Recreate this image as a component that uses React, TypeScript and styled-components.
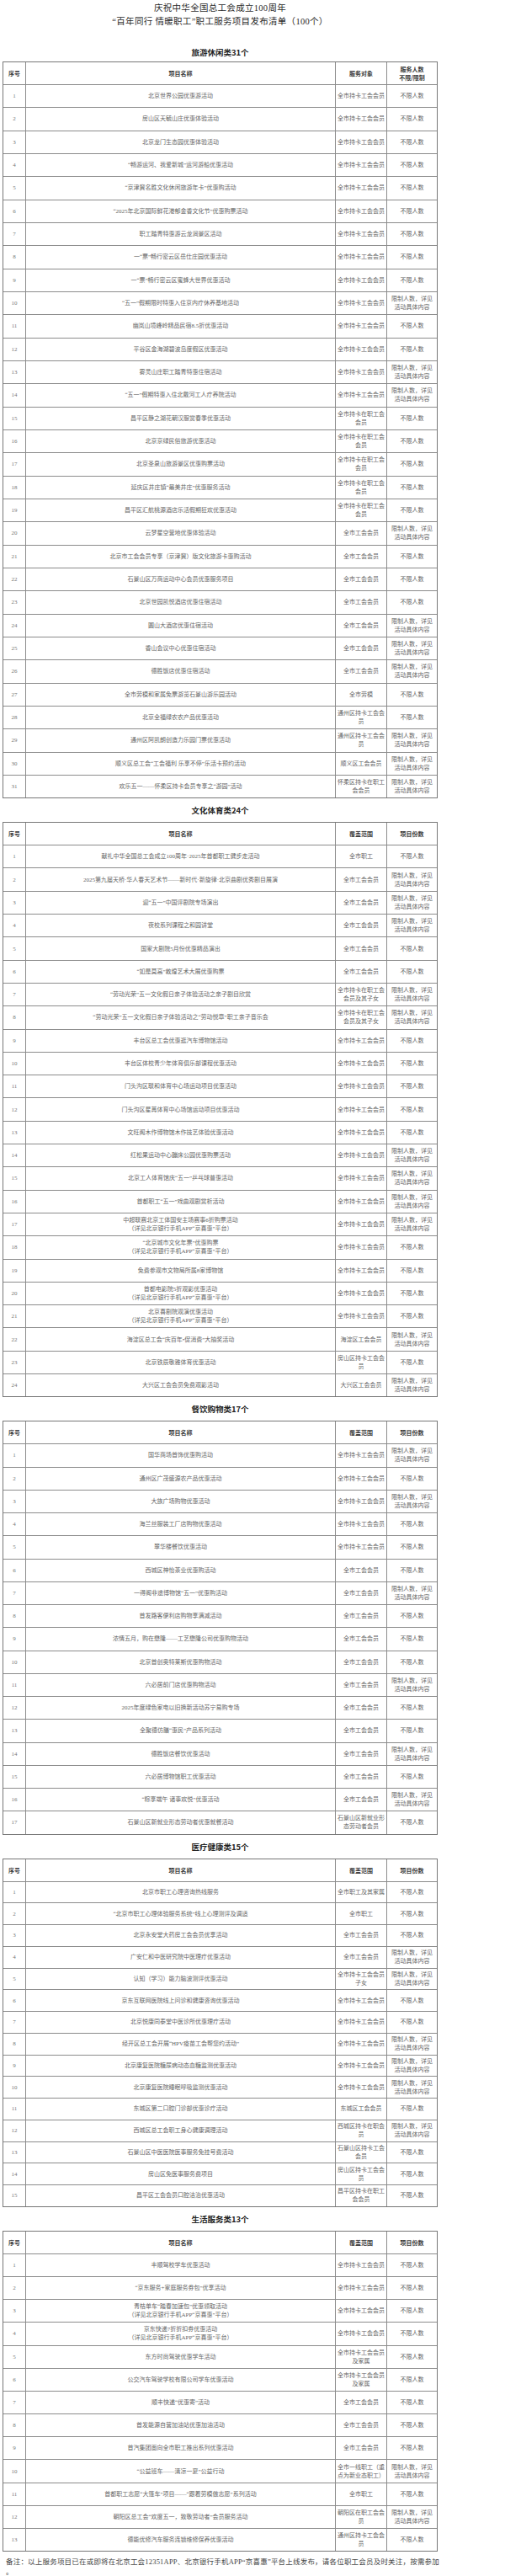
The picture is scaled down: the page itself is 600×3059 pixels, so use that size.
import styled, { createGlobalStyle } from "styled-components";

const GlobalStyle = createGlobalStyle`
  html, body {
    margin: 0;
    padding: 0;
    background: #fff;
  }
  body {
    font-family: "Liberation Serif", "Noto Sans CJK SC", serif;
  }
`;

// [项目名称, 服务对象/覆盖范围, 是否限制人数]
type Item = [string, string, 0 | 1];

type Section = {
  title: string;
  targetLabel: string;
  quotaLabel: string;
  headH: number;
  rowH: number;
  items: Item[];
};

const LIMIT = "限制人数，详见\n活动具体内容";
const FREE = "不限人数";
const JXH = "\n（详见北京银行手机APP“京喜惠”平台）";

const sections: Section[] = [
  {
    title: "旅游休闲类31个",
    targetLabel: "服务对象",
    quotaLabel: "服务人数\n不限/限制",
    headH: 27,
    rowH: 27.33,
    items: [
      ["北京世界公园优惠游活动", "全市持卡工会会员", 0],
      ["房山区天毓山庄优惠体验活动", "全市持卡工会会员", 0],
      ["北京龙门生态园优惠体验活动", "全市持卡工会会员", 0],
      ["“畅游运河、我爱新城”运河游船优惠活动", "全市持卡工会会员", 0],
      ["“京津冀名胜文化休闲旅游年卡”优惠购活动", "全市持卡工会会员", 0],
      ["“2025年北京国际鲜花港郁金香文化节”优惠购票活动", "全市持卡工会会员", 0],
      ["职工踏青特惠游云龙涧景区活动", "全市持卡工会会员", 0],
      ["一“票”畅行密云区岳仕庄园优惠活动", "全市持卡工会会员", 0],
      ["一“票”畅行密云区蜜蜂大世界优惠活动", "全市持卡工会会员", 0],
      ["“五一”假期限时特惠入住京内疗休养基地活动", "全市持卡工会会员", 1],
      ["幽岚山境峰岭精品民宿8.5折优惠活动", "全市持卡工会会员", 0],
      ["平谷区金海湖碧波岛度假区优惠活动", "全市持卡工会会员", 0],
      ["雾灵山庄职工踏青特惠住宿活动", "全市持卡工会会员", 1],
      ["“五一”假期特惠入住北戴河工人疗养院活动", "全市持卡工会会员", 1],
      ["昌平区静之湖花朝汉服赏春季优惠活动", "全市持卡在职工会\n会员", 0],
      ["北京京绿民俗旅游优惠活动", "全市持卡在职工会\n会员", 0],
      ["北京圣泉山旅游景区优惠购票活动", "全市持卡在职工会\n会员", 0],
      ["延庆区井庄镇“最美井庄”优惠服务活动", "全市持卡在职工会\n会员", 0],
      ["昌平区汇航桃源酒店乐活假期狂欢优惠活动", "全市持卡在职工会\n会员", 0],
      ["云梦星空营地优惠体验活动", "全市工会会员", 1],
      ["北京市工会会员专享（京津冀）版文化旅游卡惠购活动", "全市工会会员", 0],
      ["石景山区万商运动中心会员优惠服务项目", "全市工会会员", 0],
      ["北京世园凯悦酒店优惠住宿活动", "全市工会会员", 0],
      ["圆山大酒店优惠住宿活动", "全市工会会员", 1],
      ["香山会议中心优惠住宿活动", "全市工会会员", 1],
      ["德胜饭店优惠住宿活动", "全市工会会员", 1],
      ["全市劳模和家属免票游览石景山游乐园活动", "全市劳模", 0],
      ["北京全福绿农农产品优惠活动", "通州区持卡工会会\n员", 0],
      ["通州区阿凯朗创造力乐园门票优惠活动", "通州区持卡工会会\n员", 1],
      ["顺义区总工会“工会福利 乐享不停”乐活卡预约活动", "顺义区工会会员", 1],
      ["欢乐五一——怀柔区持卡会员专享之“游园”活动", "怀柔区持卡在职工\n会会员", 1],
    ],
  },
  {
    title: "文化体育类24个",
    targetLabel: "覆盖范围",
    quotaLabel: "项目份数",
    headH: 27,
    rowH: 27.3,
    items: [
      ["献礼中华全国总工会成立100周年·2025年首都职工健步走活动", "全市职工", 0],
      ["2025第九届天桥·华人春天艺术节——新时代·新旋律·北京曲剧优秀剧目展演", "全市工会会员", 1],
      ["迎“五一”中国评剧院专场演出", "全市工会会员", 1],
      ["夜校系列课程之和园讲堂", "全市工会会员", 1],
      ["国家大剧院5月份优惠精品演出", "全市工会会员", 0],
      ["“如是莫高”敦煌艺术大展优惠购票", "全市工会会员", 0],
      ["“劳动光荣”五一文化假日亲子体验活动之亲子剧目欣赏", "全市持卡在职工会\n会员及其子女", 1],
      ["“劳动光荣”五一文化假日亲子体验活动之“劳动悦章”职工亲子音乐会", "全市持卡在职工会\n会员及其子女", 1],
      ["丰台区总工会优惠逛汽车博物馆活动", "全市持卡工会会员", 0],
      ["丰台区体校青少年体育俱乐部课程优惠活动", "全市持卡工会会员", 0],
      ["门头沟区联和体育中心场运动项目优惠活动", "全市持卡工会会员", 0],
      ["门头沟区星苒体育中心场馆运动项目优惠活动", "全市持卡工会会员", 0],
      ["文旺阁木作博物馆木作技艺体验优惠活动", "全市持卡工会会员", 0],
      ["红松果运动中心蹦床公园优惠购票活动", "全市持卡工会会员", 1],
      ["北京工人体育馆庆“五一”乒乓球普惠活动", "全市持卡工会会员", 1],
      ["首都职工“五一”戏曲观剧赏析活动", "全市持卡工会会员", 1],
      ["中超联赛北京工体国安主场赛事6折购票活动" + JXH, "全市持卡工会会员", 1],
      ["“北京城市文化年票”优惠购票" + JXH, "全市持卡工会会员", 0],
      ["免费参观市文物局所属8家博物馆", "全市持卡工会会员", 0],
      ["首都电影院5折观影优惠活动" + JXH, "全市持卡工会会员", 0],
      ["北京喜剧院观演优惠活动" + JXH, "全市持卡工会会员", 0],
      ["海淀区总工会“庆百年•促消费”大抽奖活动", "海淀区工会会员", 1],
      ["北京铁辰敬雅体育优惠活动", "房山区持卡工会会\n员", 0],
      ["大兴区工会会员免费观影活动", "大兴区工会会员", 1],
    ],
  },
  {
    title: "餐饮购物类17个",
    targetLabel: "覆盖范围",
    quotaLabel: "项目份数",
    headH: 27,
    rowH: 27.25,
    items: [
      ["国华商场首饰优惠购活动", "全市持卡工会会员", 1],
      ["通州区广茂盛源农产品优惠活动", "全市持卡工会会员", 0],
      ["大族广场购物优惠活动", "全市持卡工会会员", 1],
      ["海兰丝服装工厂店购物优惠活动", "全市持卡工会会员", 0],
      ["翠华楼餐饮优惠活动", "全市持卡工会会员", 0],
      ["西城区神怡茶业优惠购活动", "全市工会会员", 0],
      ["一得阁非遗博物馆“五一”优惠购活动", "全市工会会员", 1],
      ["首发路客便利店购物享满减活动", "全市工会会员", 0],
      ["浓情五月，购在懋隆——工艺懋隆公司优惠购物活动", "全市工会会员", 0],
      ["北京首创奥特莱斯优惠购物活动", "全市工会会员", 0],
      ["六必居前门店优惠购物活动", "全市工会会员", 1],
      ["2025年度绿色家电以旧换新活动苏宁易购专场", "全市工会会员", 0],
      ["全聚德仿膳“惠民”产品系列活动", "全市工会会员", 0],
      ["德胜饭店餐饮优惠活动", "全市工会会员", 1],
      ["六必居博物馆职工优惠活动", "全市工会会员", 0],
      ["“粽享端午 诸事欢悦”优惠活动", "全市工会会员", 1],
      ["石景山区新就业形态劳动者优惠就餐活动", "石景山区新就业形\n态劳动者会员", 0],
    ],
  },
  {
    title: "医疗健康类15个",
    targetLabel: "覆盖范围",
    quotaLabel: "项目份数",
    headH: 27,
    rowH: 25.75,
    items: [
      ["北京市职工心理咨询热线服务", "全市职工及其家属", 0],
      ["“北京市职工心理体验服务系统”线上心理测评及调适", "全市职工", 0],
      ["北京永安堂大药房工会会员优享活动", "全市工会会员", 0],
      ["广安仁和中医研究院中医理疗优惠活动", "全市工会会员", 1],
      ["认知（学习）能力脑波测评优惠活动", "全市持卡工会会员\n子女", 1],
      ["京东互联网医院线上问诊和健康咨询优惠活动", "全市持卡工会会员", 0],
      ["北京悦康同泰堂中医诊所优惠理疗活动", "全市持卡工会会员", 0],
      ["经开区总工会开展“HPV疫苗工会帮您约活动”", "全市持卡工会会员", 1],
      ["北京康复医院糖尿病动态血糖监测优惠活动", "全市持卡工会会员", 1],
      ["北京康复医院睡眠呼吸监测优惠活动", "全市持卡工会会员", 1],
      ["东城区第二口腔门诊部优惠诊疗活动", "东城区工会会员", 0],
      ["西城区总工会职工身心健康调理活动", "西城区持卡在职会\n员", 1],
      ["石景山区中医医院医事服务免挂号费活动", "石景山区持卡工会\n会员", 0],
      ["房山区免医事服务费项目", "房山区持卡工会会\n员", 0],
      ["昌平区工会会员口腔洁治优惠活动", "昌平区持卡在职工\n会会员", 0],
    ],
  },
  {
    title: "生活服务类13个",
    targetLabel: "覆盖范围",
    quotaLabel: "项目份数",
    headH: 27,
    rowH: 27.2,
    items: [
      ["丰顺驾校学车优惠活动", "全市持卡工会会员", 0],
      ["“京东服务+家庭服务券包”优享活动", "全市持卡工会会员", 0],
      ["青桔单车“踏春加速包”优惠领取活动" + JXH, "全市持卡工会会员", 0],
      ["京东快递7折折扣券优惠活动" + JXH, "全市持卡工会会员", 0],
      ["东方时尚驾驶优惠学车活动", "全市持卡工会会员\n及家属", 0],
      ["公交汽车驾驶学校有限公司学车优惠活动", "全市持卡工会会员\n及家属", 0],
      ["顺丰快递“优惠寄”活动", "全市工会会员", 0],
      ["首发能源自营加油站优惠加油活动", "全市工会会员", 0],
      ["首汽集团面向全市职工推出系列优惠活动", "全市工会会员", 0],
      ["“公益班车——清凉一夏”公益行动", "全市一线职工（重\n点为新业态职工）", 1],
      ["首都职工志愿“大篷车”项目——“跟着劳模做志愿”系列活动", "全市职工", 0],
      ["朝阳区总工会“欢度五一，致敬劳动者”会员服务活动", "朝阳区在职工会会\n员", 1],
      ["德能优修汽车服务连锁维修保养优惠活动", "通州区持卡工会会\n员", 0],
    ],
  },
];

export default function App() {
  return (
    <>
      <GlobalStyle />
      <Page>
        <Title>
          庆祝中华全国总工会成立100周年
          <br />
          “百年同行 情暖职工”职工服务项目发布清单（100个）
        </Title>
        {sections.map((s, i) => (
          <div key={s.title}>
            <SectionTitle $first={i === 0}>{s.title}</SectionTitle>
            <Table>
              <HeadRow $h={s.headH}>
                <HeadCell>序号</HeadCell>
                <HeadCell>项目名称</HeadCell>
                <HeadCell>{s.targetLabel}</HeadCell>
                <HeadCell>{s.quotaLabel}</HeadCell>
              </HeadRow>
              {s.items.map((it, j) => (
                <Row key={j} $h={s.rowH}>
                  <NumCell>{j + 1}</NumCell>
                  <Cell>{it[0]}</Cell>
                  <Cell>{it[1]}</Cell>
                  <Cell>{it[2] ? LIMIT : FREE}</Cell>
                </Row>
              ))}
            </Table>
          </div>
        ))}
        <Note>
          <NoteLine>
            备注：以上服务项目已在或即将在北京工会12351APP、北京银行手机APP“京喜惠”平台上线发布，请各位职工会员及时关注，按需参加
          </NoteLine>
          <NoteLine>。</NoteLine>
        </Note>
      </Page>
    </>
  );
}

const Page = styled.div`
  width: 517px;
  margin-left: 3px;
  padding-top: 2px;
`;

const Title = styled.h1`
  margin: 0 0 14px;
  font-family: "Liberation Serif", "Noto Sans CJK SC", serif;
  font-size: 10.5px;
  line-height: 16px;
  font-weight: normal;
  color: #2a2a2a;
  text-align: center;
  letter-spacing: 0.3px;
`;

const SectionTitle = styled.h2<{ $first?: boolean }>`
  margin: 0;
  padding: 7px 0 ${(p) => (p.$first ? 4 : 7)}px;
  font-family: "Noto Sans CJK SC", sans-serif;
  font-size: 9.5px;
  line-height: 14px;
  font-weight: bold;
  color: #222;
  text-align: center;
`;

const Table = styled.div`
  border: 1px solid #777;
  border-bottom: none;
`;

const Row = styled.div<{ $h: number }>`
  display: grid;
  grid-template-columns: 27px 368px 61px 59px;
  height: ${(p) => p.$h}px;
  box-sizing: border-box;
  border-bottom: 1px solid #8c8c8c;
  &:last-child {
    border-bottom-color: #777;
  }
`;

const HeadRow = styled(Row)`
  color: #333;
`;

const Cell = styled.div`
  display: flex;
  align-items: center;
  justify-content: center;
  padding: 0 1px;
  border-right: 1px solid #8c8c8c;
  font-size: 7px;
  line-height: 10px;
  color: #666;
  text-align: center;
  white-space: pre-line;
  &:last-child {
    border-right: none;
  }
`;

const NumCell = styled(Cell)`
  color: #777;
`;

const HeadCell = styled(Cell)`
  font-family: "Noto Sans CJK SC", sans-serif;
  font-weight: bold;
  color: #3a3a3a;
`;

const Note = styled.div`
  margin: 6px 0 0;
  padding-left: 4px;
  font-size: 8.5px;
  line-height: 12px;
  letter-spacing: 0.2px;
  color: #444;
`;

const NoteLine = styled.div`
  white-space: nowrap;
`;
